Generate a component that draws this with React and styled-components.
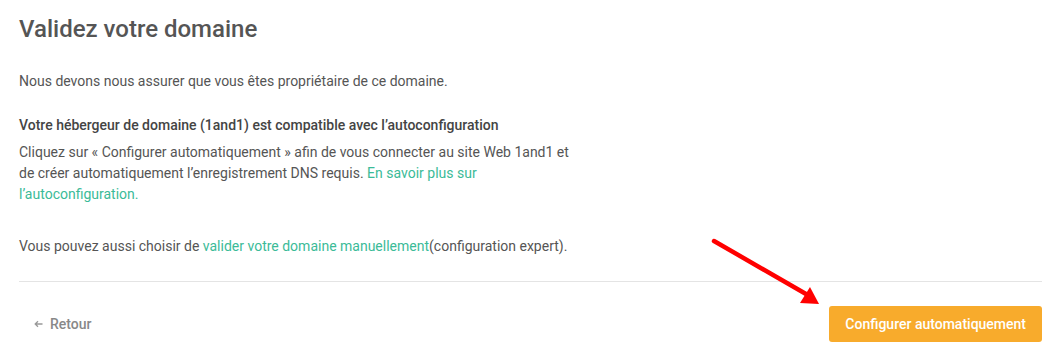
import React from "react"
import styled, { createGlobalStyle } from "styled-components"

const GlobalStyle = createGlobalStyle`
  html, body {
    margin: 0;
    padding: 0;
    background: #ffffff;
  }
  body {
    font-family: Roboto, "Liberation Sans", Arial, sans-serif;
    -webkit-font-smoothing: antialiased;
  }
`

const Page = styled.div`
  position: relative;
  width: 1056px;
  height: 350px;
  box-sizing: border-box;
  padding: 13px 14px 0 19px;
  color: #555555;
`

const Title = styled.h1`
  margin: 0;
  font-size: 24px;
  line-height: 32px;
  font-weight: 500;
  color: #555555;
`

const Text = styled.p`
  margin: ${(p) => p.$top || 0}px 0 0;
  width: ${(p) => p.$width || "auto"};
  font-size: 14px;
  line-height: 21px;
  font-weight: ${(p) => (p.$strong ? 500 : 400)};
  color: ${(p) => (p.$strong ? "#444444" : "#555555")};
`

const TextLink = styled.a`
  color: #3bbb98;
  text-decoration: none;
  cursor: pointer;
`

const Divider = styled.hr`
  margin: 24px 0 0;
  border: 0;
  border-top: 1px solid #e4e4e4;
  width: 1023px;
`

const Footer = styled.div`
  display: flex;
  align-items: center;
  justify-content: space-between;
  width: 1023px;
  margin-top: 24px;
`

const BackButton = styled.button`
  display: flex;
  align-items: center;
  gap: 7px;
  margin-left: 15px;
  padding: 0;
  border: 0;
  background: none;
  font-family: inherit;
  font-size: 14px;
  font-weight: 500;
  color: #888888;
  cursor: pointer;
`

const PrimaryButton = styled.button`
  height: 36px;
  padding: 0 16px;
  border: 0;
  border-radius: 3px;
  background: #f8ab2c;
  color: #ffffff;
  font-family: inherit;
  font-size: 14px;
  font-weight: 500;
  cursor: pointer;
`

const Annotation = styled.svg`
  position: absolute;
  left: 0;
  top: 0;
  pointer-events: none;
`

export default function App() {
  return (
    <>
      <GlobalStyle />
      <Page>
        <Title>Validez votre domaine</Title>
        <Text $top={26}>
          Nous devons nous assurer que vous êtes propriétaire de ce domaine.
        </Text>
        <Text $top={23} $strong>
          Votre hébergeur de domaine (1and1) est compatible avec l’autoconfiguration
        </Text>
        <Text $top={6} $width="560px">
          Cliquez sur « Configurer automatiquement » afin de vous connecter au site Web 1and1 et de
          créer automatiquement l’enregistrement DNS requis.{" "}
          <TextLink>En savoir plus sur l’autoconfiguration.</TextLink>
        </Text>
        <Text $top={31}>
          Vous pouvez aussi choisir de <TextLink>valider votre domaine manuellement</TextLink>
          (configuration expert).
        </Text>
        <Divider />
        <Footer>
          <BackButton>
            <svg width="9" height="8" viewBox="0 0 9 8">
              <path d="M8.5 4H1.5M4 1.2L1.2 4L4 6.8" fill="none" stroke="#999" strokeWidth="1.3" />
            </svg>
            Retour
          </BackButton>
          <PrimaryButton>Configurer automatiquement</PrimaryButton>
        </Footer>
        <Annotation width="1056" height="350" viewBox="0 0 1056 350">
          <line x1="714" y1="241" x2="806" y2="294" stroke="#ff0000" strokeWidth="4.5" strokeLinecap="round" />
          <polygon points="819,304 800,303 810,287" fill="#ff0000" />
        </Annotation>
      </Page>
    </>
  )
}
